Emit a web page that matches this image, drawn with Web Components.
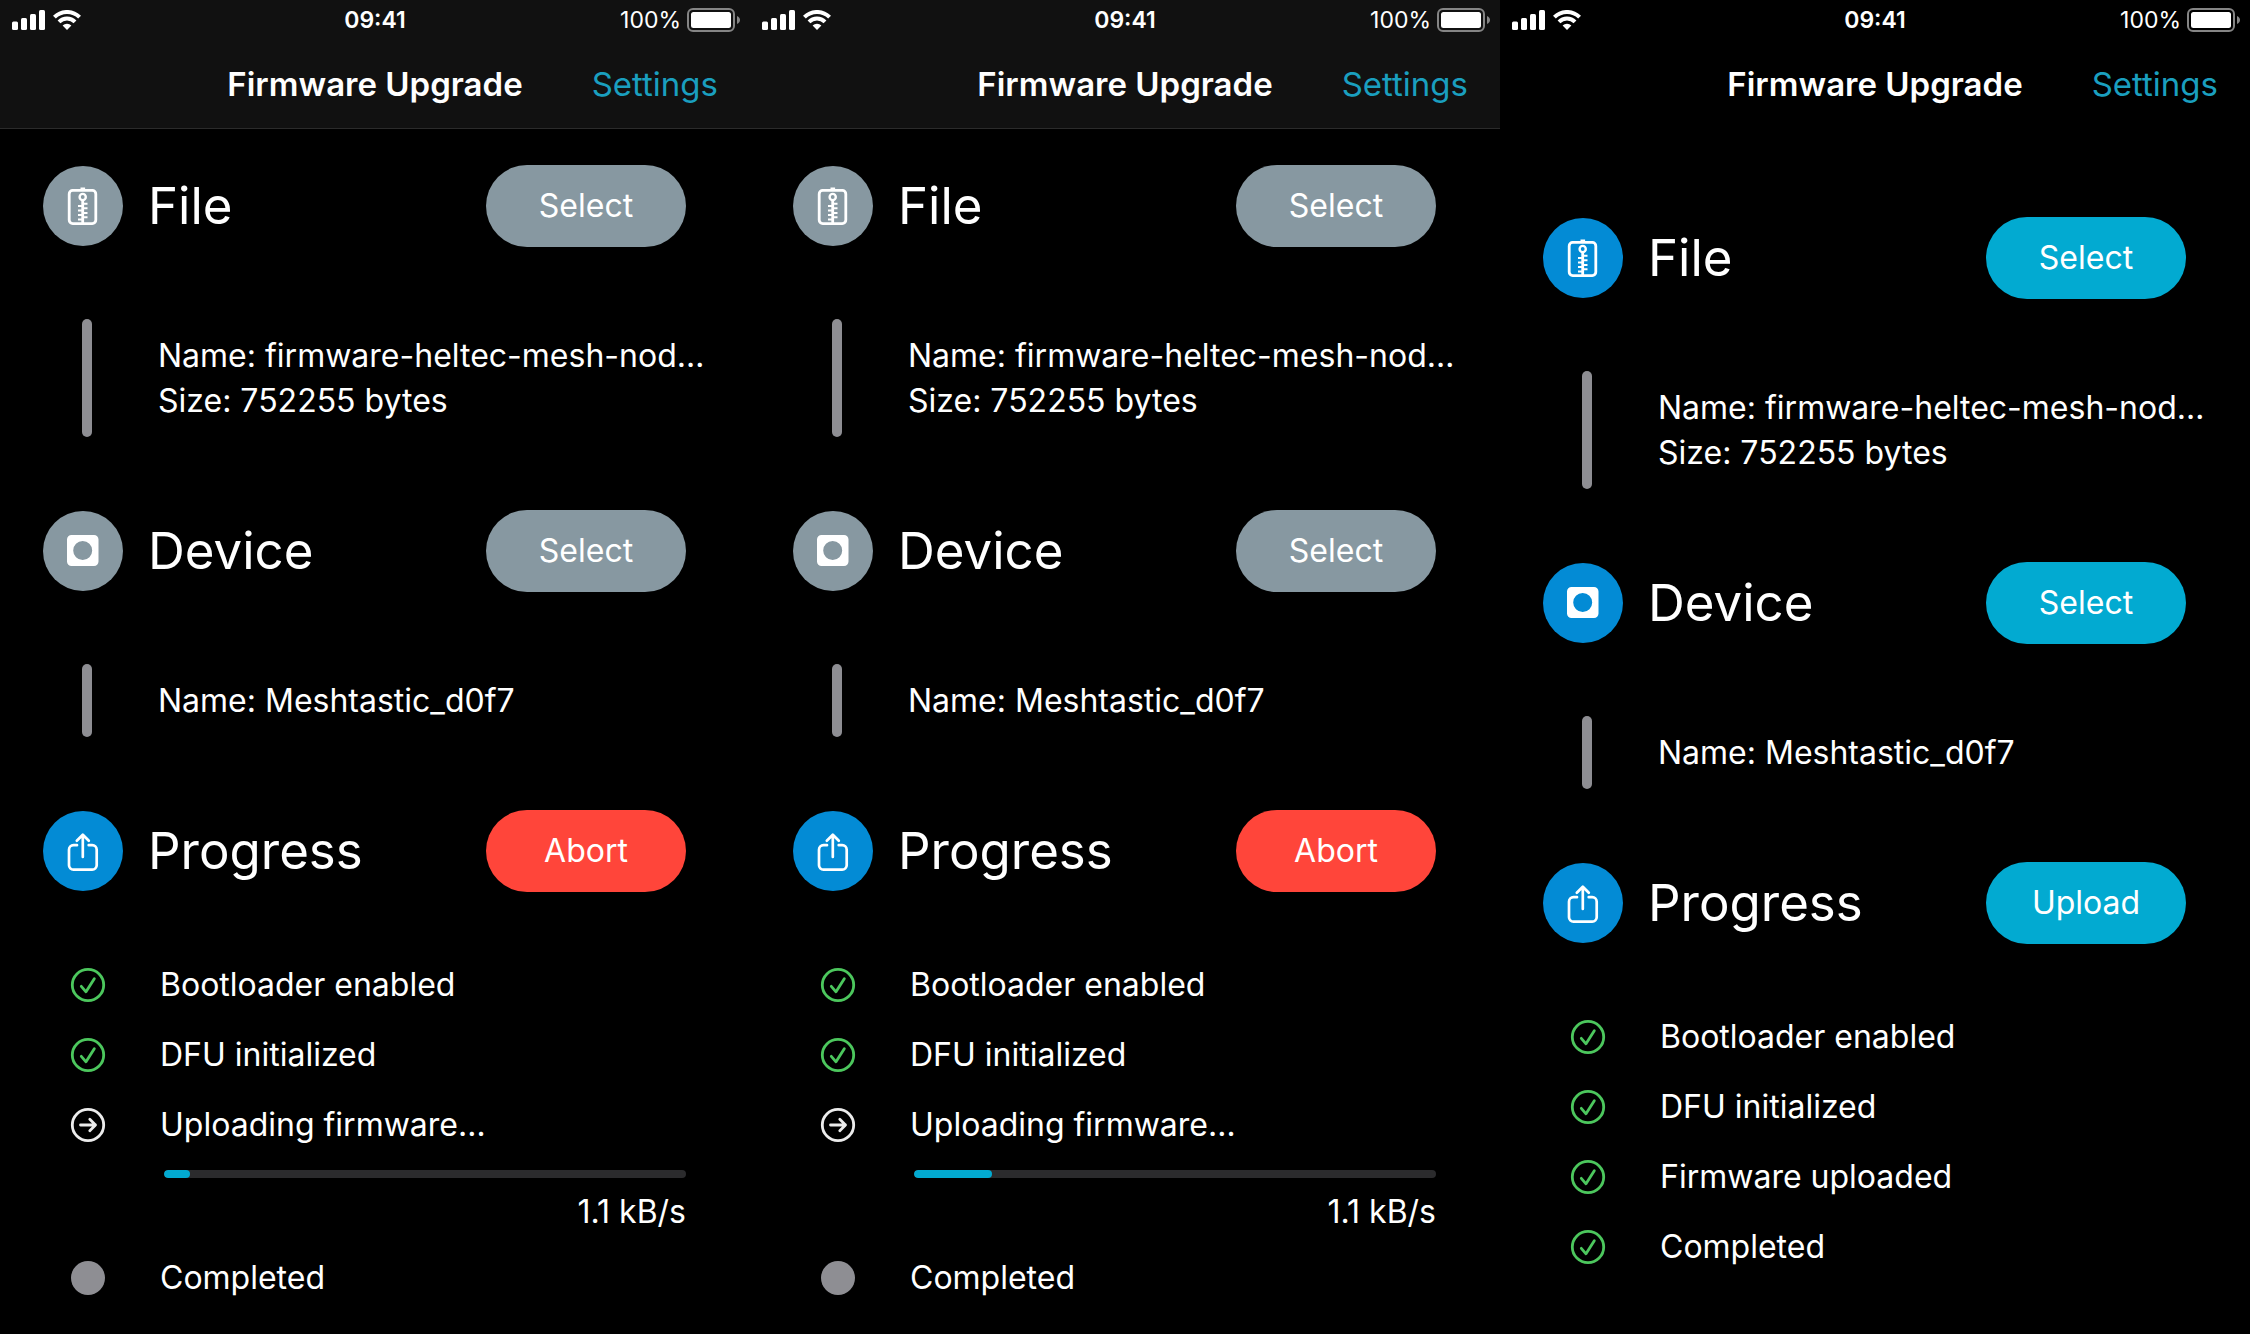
<!DOCTYPE html>
<html lang="en">
<head>
<meta charset="utf-8">
<meta name="viewport" content="width=device-width, initial-scale=1">
<title>Firmware Upgrade</title>
<style>
  html { background: #000; }
  body {
    margin: 0;
    min-height: 100vh;
    background: #000;
    color: #fff;
    font-family: Inter, "Liberation Sans", sans-serif;
    font-size: 32px;
    line-height: 45px;
  }
</style>
</head>
<body>
<dfu-gallery>
  <phone-screen bar="raised">
    <wizard-section icon="zip" tone="muted" action="Select" heading="File">
      <detail-lines><div>Name: firmware-heltec-mesh-nod…</div><div>Size: 752255 bytes</div></detail-lines>
    </wizard-section>
    <wizard-section icon="device" tone="muted" action="Select" heading="Device">
      <detail-lines><div>Name: Meshtastic_d0f7</div></detail-lines>
    </wizard-section>
    <wizard-section icon="share" tone="danger" action="Abort" heading="Progress">
      <step-list>
        <step-item state="done">Bootloader enabled</step-item>
        <step-item state="done">DFU initialized</step-item>
        <step-item state="active">Uploading firmware…</step-item>
        <upload-meter value="5">1.1 kB/s</upload-meter>
        <step-item state="idle">Completed</step-item>
      </step-list>
    </wizard-section>
  </phone-screen>
  <phone-screen bar="raised">
    <wizard-section icon="zip" tone="muted" action="Select" heading="File">
      <detail-lines><div>Name: firmware-heltec-mesh-nod…</div><div>Size: 752255 bytes</div></detail-lines>
    </wizard-section>
    <wizard-section icon="device" tone="muted" action="Select" heading="Device">
      <detail-lines><div>Name: Meshtastic_d0f7</div></detail-lines>
    </wizard-section>
    <wizard-section icon="share" tone="danger" action="Abort" heading="Progress">
      <step-list>
        <step-item state="done">Bootloader enabled</step-item>
        <step-item state="done">DFU initialized</step-item>
        <step-item state="active">Uploading firmware…</step-item>
        <upload-meter value="15">1.1 kB/s</upload-meter>
        <step-item state="idle">Completed</step-item>
      </step-list>
    </wizard-section>
  </phone-screen>
  <phone-screen bar="flat">
    <wizard-section icon="zip" tone="accent" action="Select" heading="File">
      <detail-lines><div>Name: firmware-heltec-mesh-nod…</div><div>Size: 752255 bytes</div></detail-lines>
    </wizard-section>
    <wizard-section icon="device" tone="accent" action="Select" heading="Device">
      <detail-lines><div>Name: Meshtastic_d0f7</div></detail-lines>
    </wizard-section>
    <wizard-section icon="share" tone="accent" action="Upload" heading="Progress">
      <step-list>
        <step-item state="done">Bootloader enabled</step-item>
        <step-item state="done">DFU initialized</step-item>
        <step-item state="done">Firmware uploaded</step-item>
        <step-item state="done">Completed</step-item>
      </step-list>
    </wizard-section>
  </phone-screen>
</dfu-gallery>

<script>
const define = (name, render) => customElements.define(name, class extends HTMLElement {
  constructor() {
    super();
    this.attachShadow({ mode: 'open' });
  }
  connectedCallback() {
    this.shadowRoot.innerHTML = render(this);
  }
});

define('dfu-gallery', () => `
  <style>
    :host { display: grid; grid-template-columns: repeat(3, minmax(0, 1fr)); min-height: 100vh; }
  </style>
  <slot></slot>`);

define('status-bar', () => `
  <style>
    :host {
      display: grid; grid-template-columns: 1fr auto 1fr; align-items: center;
      height: 40px; padding: 0 10px; font-size: 23px; line-height: 28px;
    }
    .left, .right { display: flex; align-items: center; }
    .left { gap: 8px; padding-left: 2px; }
    .right { justify-content: flex-end; gap: 6px; }
    time { font-weight: 600; }
    svg { display: block; }
  </style>
  <div class="left">
    <svg width="33" height="20" viewBox="0 0 33 20" fill="#fff" aria-hidden="true">
      <rect x="0" y="11.500" width="6" height="8.500" rx="1.500"/>
      <rect x="9" y="8" width="6" height="12" rx="1.500"/>
      <rect x="18" y="4" width="6" height="16" rx="1.500"/>
      <rect x="27" y="0" width="6" height="20" rx="1.500"/>
    </svg>
    <svg width="28" height="20" viewBox="0 0 28 20" aria-hidden="true">
      <g fill="none" stroke="#fff" stroke-width="4">
        <path d="M1.400 7.200a17.800 17.800 0 0 1 25.200 0"/>
        <path d="M6 11.800a11.300 11.300 0 0 1 16 0"/>
      </g>
      <path fill="#fff" d="M14 20l-4.400-4.500a6.300 6.300 0 0 1 8.800 0z"/>
    </svg>
  </div>
  <time>09:41</time>
  <div class="right">
    <span>100%</span>
    <svg width="53" height="24" viewBox="0 0 53 24" aria-hidden="true">
      <rect x="1" y="1" width="46" height="22" rx="5" fill="none" stroke="#858585" stroke-width="2"/>
      <rect x="4" y="4" width="40" height="16" rx="2.500" fill="#fff"/>
      <path d="M50 8c4 1.500 4 6.500 0 8z" fill="#858585"/>
    </svg>
  </div>`);

define('nav-bar', () => `
  <style>
    :host {
      display: grid; grid-template-columns: 1fr auto 1fr; align-items: center;
      height: 88px; padding: 0 32px; font-size: 33px;
    }
    h1 { margin: 0; grid-column: 2; font-size: inherit; font-weight: 600; }
    a { justify-self: end; color: #1a9fbf; text-decoration: none; }
  </style>
  <h1>Firmware Upgrade</h1>
  <a href="#settings">Settings</a>`);

define('phone-screen', () => `
  <style>
    :host { display: flex; flex-direction: column; background: #000; }
    header { border-bottom: 1px solid transparent; }
    :host([bar="raised"]) header { background: #111; border-color: #2b2b2b; }
    main { display: flex; flex-direction: column; gap: 74px; padding: 37px 0 32px; }
    :host([bar="flat"]) main { padding-top: 89px; }
  </style>
  <header><status-bar></status-bar><nav-bar></nav-bar></header>
  <main><slot></slot></main>`);

const icons = {
  zip: `<g fill="none" stroke="#fff" stroke-width="2.800">
      <rect x="26.200" y="24.400" width="26.600" height="33.200" rx="3.500"/>
      <circle cx="39.700" cy="31" r="3.100" stroke-width="2.400"/>
      <path d="M39.700 34v23M37.500 23h4.600"/>
      <path stroke-width="2" d="M39.700 37.800h4.800M35 40.100h4.700M39.700 42.300h4.800M35 44.600h4.700M39.700 46.900h4.800M35 49h4.700M39.700 51.200h4.800M35 53.500h4.700"/>
    </g>`,
  device: `<path fill="#fff" fill-rule="evenodd" d="M28.500 24H51a4.500 4.500 0 0 1 4.500 4.500v22A4.500 4.500 0 0 1 51 55H28.500a4.500 4.500 0 0 1-4.500-4.500v-22A4.500 4.500 0 0 1 28.500 24zm11.200 6a9.500 9.500 0 1 0 0 19 9.500 9.500 0 0 0 0-19z"/>`,
  share: `<g fill="none" stroke="#fff" stroke-width="2.700" stroke-linecap="round" stroke-linejoin="round">
      <path d="M34 34.200h-3.500a4.500 4.500 0 0 0-4.500 4.500v15.500a4.500 4.500 0 0 0 4.500 4.500h18.700a4.500 4.500 0 0 0 4.500-4.500V38.700a4.500 4.500 0 0 0-4.500-4.500h-3.500"/>
      <path d="M39.800 46V24M33.800 29.700l6-6 6 6"/>
    </g>`
};

define('wizard-section', el => `
  <style>
    :host { display: block; }
    .head { display: flex; align-items: center; height: 80px; padding: 0 64px 0 43px; }
    .disc { flex: none; display: block; width: 80px; height: 80px; border-radius: 50%; background: #038bd5; }
    :host([icon="zip"][tone="muted"]) .disc, :host([icon="device"][tone="muted"]) .disc { background: #8798a1; }
    h2 { flex: 1; margin: 0 0 0 25px; font-size: 51px; line-height: 64px; font-weight: 400; }
    button {
      width: 200px; height: 82px; border: 0; border-radius: 41px; padding: 0 0 2px;
      font: inherit; color: #fff; background: #02aad1;
    }
    :host([tone="muted"]) button { background: #8798a1; }
    :host([tone="danger"]) button { background: #ff453a; }
    .body { margin-top: 73px; }
    :host([icon="share"]) .body { margin-top: 71px; }
  </style>
  <div class="head">
    <svg class="disc" viewBox="0 0 80 80" aria-hidden="true">${icons[el.getAttribute('icon')]}</svg>
    <h2>${el.getAttribute('heading')}</h2>
    <button type="button">${el.getAttribute('action')}</button>
  </div>
  <div class="body"><slot></slot></div>`);

define('detail-lines', () => `
  <style>
    :host { display: flex; gap: 66px; padding-left: 82px; }
    .rail { flex: none; width: 10px; border-radius: 5px; background: #8e8e93; }
    .text { padding: 14px 0; white-space: nowrap; }
  </style>
  <div class="rail"></div>
  <div class="text"><slot></slot></div>`);

define('step-list', () => `
  <style>
    :host { display: flex; flex-direction: column; gap: 25px; padding: 0 64px 0 70px; }
  </style>
  <slot></slot>`);

const marks = {
  done: `<g fill="none" stroke="#4cc75d" stroke-width="2.800" stroke-linecap="round" stroke-linejoin="round">
      <circle cx="18" cy="18" r="15.700"/><path d="M11.300 19.300l4.700 5.500 8.300-13"/></g>`,
  active: `<g fill="none" stroke="#ececec" stroke-width="2.800" stroke-linecap="round" stroke-linejoin="round">
      <circle cx="18" cy="18" r="15.700"/><path d="M10.500 18h15M19.800 12.200l5.700 5.800-5.700 5.800"/></g>`,
  idle: `<circle cx="18" cy="18" r="17" fill="#8e8e93"/>`
};

define('step-item', el => `
  <style>
    :host { display: flex; align-items: center; gap: 54px; }
    svg { flex: none; display: block; }
  </style>
  <svg width="36" height="36" viewBox="0 0 36 36" aria-hidden="true">${marks[el.getAttribute('state')]}</svg>
  <span><slot></slot></span>`);

define('upload-meter', el => `
  <style>
    :host { display: flex; flex-direction: column; gap: 11px; padding-left: 94px; margin: -2px 0 -4px; }
    .track { height: 8px; border-radius: 4px; background: #2b2b2d; overflow: hidden; }
    .fill { height: 8px; border-radius: 4px; background: #02aad1; width: ${el.getAttribute('value')}%; }
    .rate { text-align: right; }
  </style>
  <div class="track" role="progressbar" aria-label="Upload progress" aria-valuenow="${el.getAttribute('value')}"><div class="fill"></div></div>
  <div class="rate"><slot></slot></div>`);
</script>
</body>
</html>
